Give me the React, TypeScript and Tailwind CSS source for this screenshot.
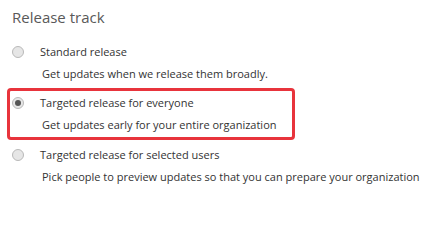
import React from "react";

interface OptionProps {
  readonly label: string;
  readonly description: string;
  readonly checked?: boolean;
}

const Radio: React.FC<{ checked?: boolean }> = ({ checked }) => (
  <span className="flex h-[12px] w-[12px] shrink-0 items-center justify-center rounded-full border border-[#b9b9b9] bg-[#e6e6e6]">
    {checked && <span className="h-[6px] w-[6px] rounded-full bg-[#555]" />}
  </span>
);

const Option: React.FC<OptionProps> = ({ label, description, checked }) => (
  <div className="flex flex-col whitespace-nowrap text-[11px] text-[#333]">
    <div className="flex h-[20px] items-center">
      <span className="w-[29px] pl-[1px]">
        <Radio checked={checked} />
      </span>
      <span>{label}</span>
    </div>
    <div className="flex h-[24px] items-center pl-[31px]">{description}</div>
  </div>
);

export default function App() {
  return (
    <div
      className="h-[203px] w-[432px] overflow-hidden bg-white"
      style={{ fontFamily: '"Segoe UI", "Open Sans", sans-serif' }}
    >
      <h1 className="pl-[12px] pt-[5px] text-[15px] leading-[24px] text-[#595959]">
        Release track
      </h1>
      <div className="flex flex-col pl-[11px] pt-[13px]">
        <Option
          label="Standard release"
          description="Get updates when we release them broadly."
        />
        <div className="-ml-[4px] mt-[2px] w-[288px] rounded-[4px] border-[3px] border-[#e8343c] pl-[1px] pt-[2px]">
          <Option
            checked
            label="Targeted release for everyone"
            description="Get updates early for your entire organization"
          />
        </div>
        <div className="mt-[5px]">
          <Option
            label="Targeted release for selected users"
            description="Pick people to preview updates so that you can prepare your organization"
          />
        </div>
      </div>
    </div>
  );
}
